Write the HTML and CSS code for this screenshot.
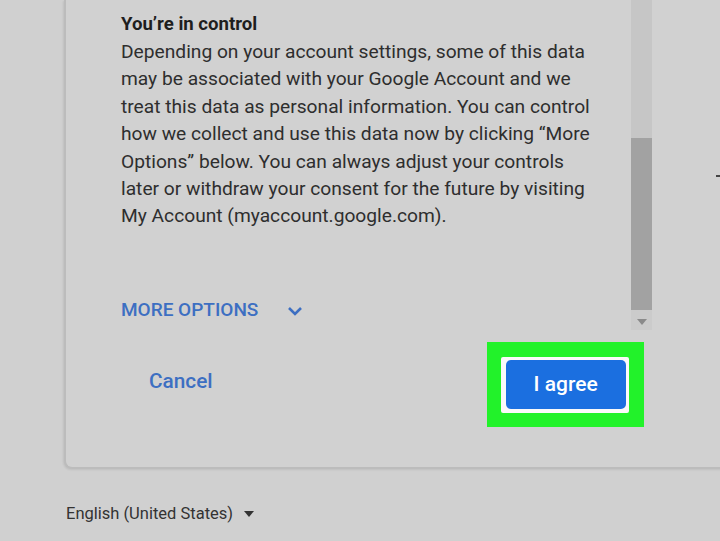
FILE: index.html
```html
<!DOCTYPE html>
<html lang="en">
<head>
<meta charset="utf-8">
<title>Consent</title>
<link rel="stylesheet" href="styles.css">
</head>
<body>
<div class="page">
  <div class="card">
    <div class="scroll-area">
      <div class="scroll-content">
        <h2 class="heading">You’re in control</h2>
        <p class="body-text">Depending on your account settings, some of this data<br>may be associated with your Google Account and we<br>treat this data as personal information. You can control<br>how we collect and use this data now by clicking “More<br>Options” below. You can always adjust your controls<br>later or withdraw your consent for the future by visiting<br>My Account (myaccount.google.com).</p>
        <div class="more-options">
          <span class="more-label">MORE OPTIONS</span>
          <svg class="chevron" width="16" height="10" viewBox="0 0 16 10"><path d="M2 2 L8 8 L14 2" fill="none" stroke="#3d6fc2" stroke-width="2.6"/></svg>
        </div>
      </div>
      <div class="scrollbar">
        <div class="track"></div>
        <div class="thumb"></div>
        <div class="arrow"><svg width="10" height="6" viewBox="0 0 10 6"><path d="M0 0 L10 0 L5 6 Z" fill="#8a8a8a"/></svg></div>
      </div>
    </div>
    <div class="actions">
      <span class="cancel">Cancel</span>
      <div class="highlight">
        <div class="agree-frame">
          <span class="agree">I agree</span>
        </div>
      </div>
    </div>
  </div>
  <div class="footer">
    <span class="lang">English (United States)</span>
    <svg class="caret" width="10" height="6" viewBox="0 0 10 6"><path d="M0 0 L10 0 L5 6 Z" fill="#333"/></svg>
  </div>
  <span class="edge-mark"></span>
</div>
</body>
</html>
```

FILE: styles.css
```css
html, body {
  margin: 0;
  padding: 0;
  background: #d0d0d0;
  overflow: hidden;
}
.page {
  position: relative;
  width: 720px;
  height: 541px;
  font-family: Roboto, "Liberation Sans", sans-serif;
  overflow: hidden;
}
.card {
  margin-left: 64px;
  width: 720px;
  height: 467px;
  background: #d1d1d1;
  border-left: 2px solid #bcbcbc;
  border-bottom: 2px solid #bcbcbc;
  border-bottom-left-radius: 8px;
  box-shadow: -1px 1px 2px rgba(0,0,0,0.08);
  display: flex;
  flex-direction: column;
}
.scroll-area {
  display: flex;
  height: 330px;
}
.scroll-content {
  width: 509px;
  padding-left: 55px;
  padding-top: 12px;
}
.heading {
  margin: 0;
  font-size: 18.6px;
  font-weight: 700;
  line-height: 24px;
  color: #1e1e1e;
}
.body-text {
  margin: 2px 0 0 0;
  font-size: 19.2px;
  line-height: 27.4px;
  color: #2e2e2e;
  white-space: nowrap;
}
.more-options {
  display: flex;
  align-items: center;
  margin-top: 68px;
  gap: 29px;
}
.more-label {
  font-size: 19px;
  font-weight: 500;
  color: #3d6fc2;
}
.chevron {
  margin-top: 4px;
}
.scrollbar {
  width: 21px;
  margin-left: 1px;
  display: flex;
  flex-direction: column;
  background: #cbcbcb;
}
.track {
  height: 138px;
  background: #c6c6c6;
}
.thumb {
  height: 172px;
  background: #a2a2a2;
}
.arrow {
  flex: 1;
  display: flex;
  justify-content: center;
  padding-top: 9px;
}
.actions {
  display: flex;
  align-items: flex-start;
  padding-top: 12px;
}
.cancel {
  margin-left: 83px;
  margin-top: 27px;
  font-size: 20.8px;
  font-weight: 500;
  color: #3d6fc2;
}
.highlight {
  margin-left: 274px;
  width: 157px;
  height: 85px;
  background: #22f22a;
  display: flex;
  align-items: flex-start;
  box-sizing: border-box;
  padding: 15px 0 0 14px;
}
.agree-frame {
  width: 128px;
  height: 56px;
  box-sizing: border-box;
  padding: 3px 3px 4px 5px;
  background: #fafafa;
  border-radius: 2px;
}
.agree {
  display: flex;
  align-items: center;
  justify-content: center;
  height: 100%;
  background: #1b6fe0;
  border-radius: 5px;
  color: #fff;
  font-size: 21px;
  font-weight: 500;
  padding-bottom: 1px;
  box-sizing: border-box;
}
.footer {
  display: flex;
  align-items: center;
  gap: 11px;
  margin-left: 66px;
  margin-top: 35px;
}
.lang {
  font-size: 16.5px;
  color: #333;
}
.caret {
  margin-top: 0px;
}
.edge-mark {
  position: absolute;
  left: 716px;
  top: 175px;
  width: 4px;
  height: 2px;
  background: #444;
}
```
